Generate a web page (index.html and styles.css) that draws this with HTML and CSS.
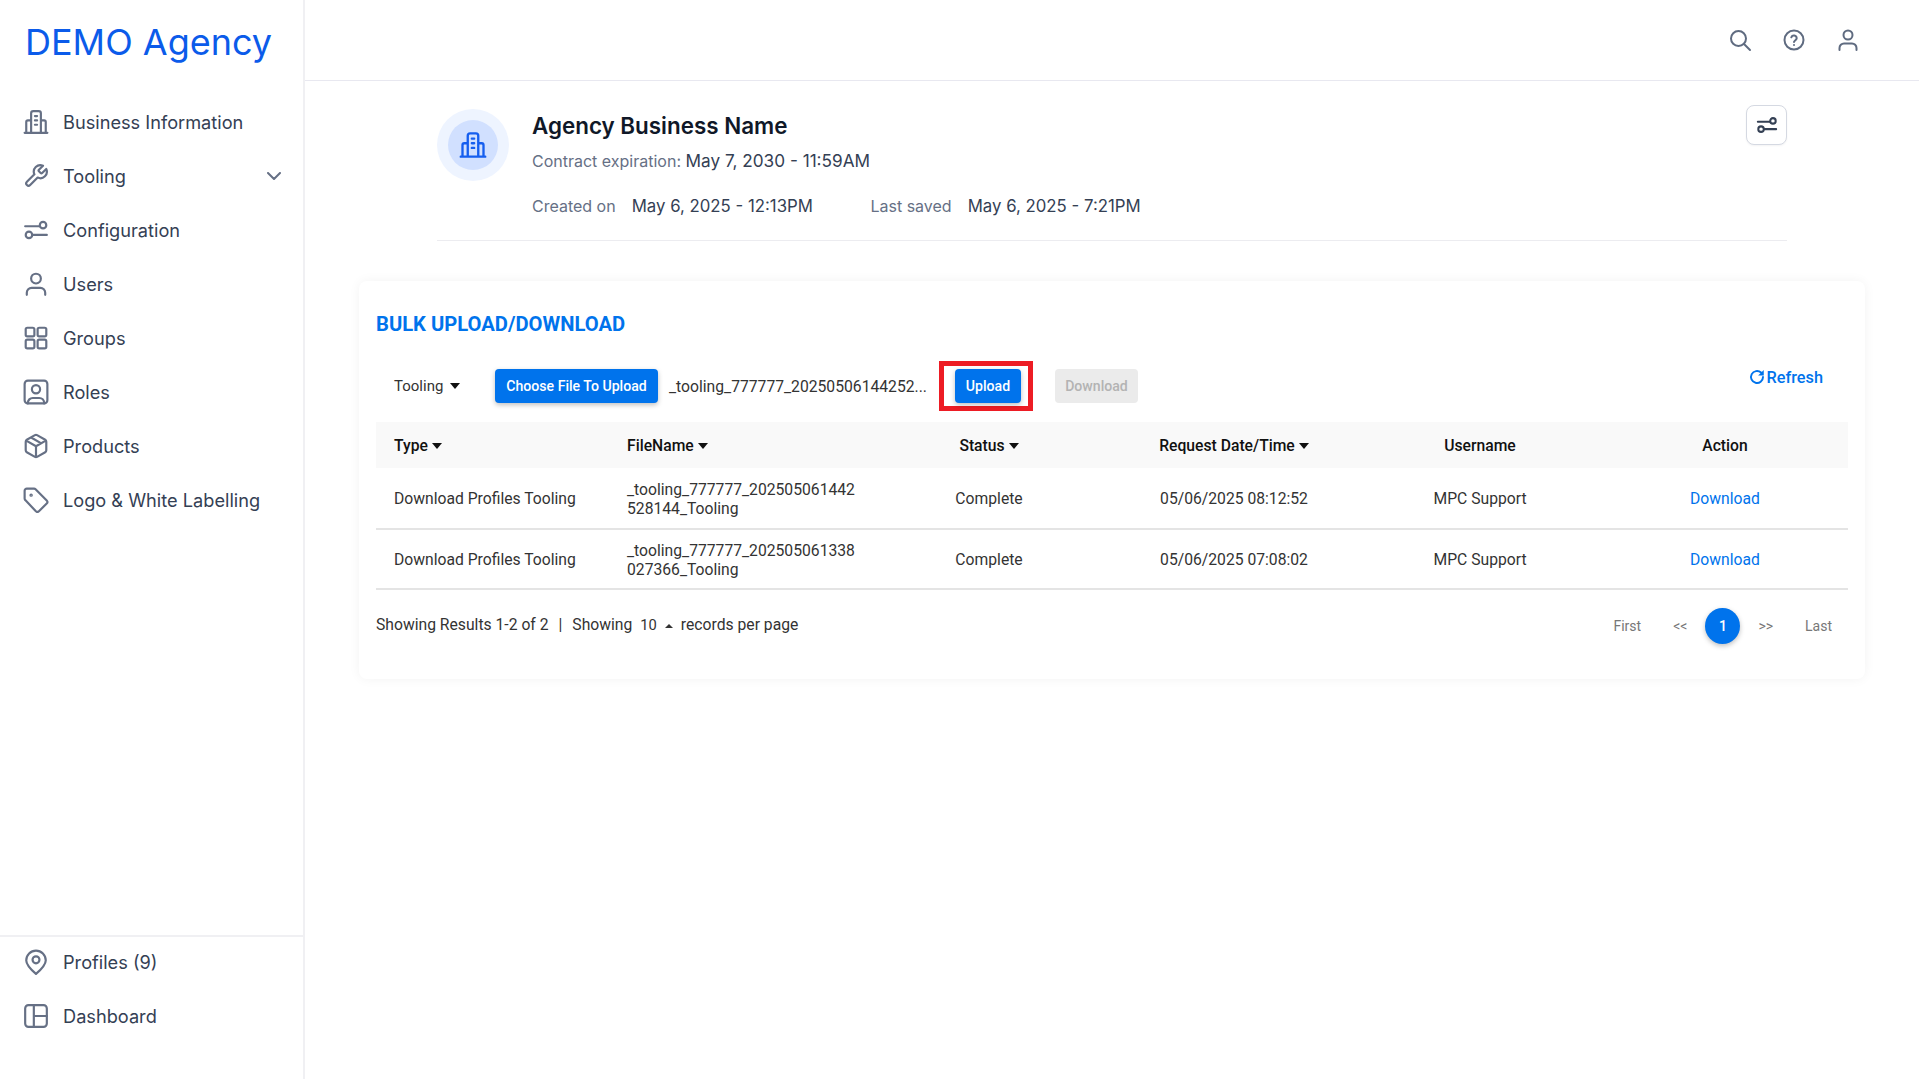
FILE: index.html
```html
<!DOCTYPE html>
<html lang="en">
<head>
    <meta charset="UTF-8">
    <title>Bulk Upload/Download</title>
    <link rel="stylesheet" href="styles.css">
</head>
<body>
    <svg class="sprite" xmlns="http://www.w3.org/2000/svg">
        <symbol id="i-building" viewBox="0 0 24 24"><path d="M1.500 22h21M7.500 22V4a2 2 0 0 1 2-2h5a2 2 0 0 1 2 2v18M7.500 10.500H4.500a1.500 1.500 0 0 0-1.500 1.500v10M16.500 10.500h3a1.500 1.500 0 0 1 1.500 1.500v10M11 6.500h2M11 10.500h2M11 14.500h2"/></symbol>
        <symbol id="i-wrench" viewBox="0 0 24 24"><path d="M14.700 6.300a1 1 0 0 0 0 1.400l1.600 1.600a1 1 0 0 0 1.400 0l3.770-3.770a6 6 0 0 1-7.940 7.940l-6.910 6.910a2.120 2.120 0 0 1-3-3l6.910-6.910a6 6 0 0 1 7.940-7.940l-3.760 3.760z"/></symbol>
        <symbol id="i-sliders" viewBox="0 0 24 24"><path d="M2 8.500h13M9.500 16.500H22"/><circle cx="18.500" cy="7.500" r="3"/><circle cx="5.500" cy="16.500" r="3"/></symbol>
        <symbol id="i-user" viewBox="0 0 24 24"><circle cx="12" cy="7" r="4.500"/><path d="M3.500 22v-2a4.500 4.500 0 0 1 4.500-4.500h8a4.500 4.500 0 0 1 4.500 4.500v2"/></symbol>
        <symbol id="i-grid" viewBox="0 0 24 24"><rect x="2.500" y="2.500" width="8" height="8" rx="1.500"/><rect x="13.500" y="2.500" width="8" height="8" rx="1.500"/><rect x="2.500" y="13.500" width="8" height="8" rx="1.500"/><rect x="13.500" y="13.500" width="8" height="8" rx="1.500"/></symbol>
        <symbol id="i-role" viewBox="0 0 24 24"><rect x="1.500" y="1.500" width="21" height="21" rx="3"/><circle cx="12" cy="9.500" r="3.800"/><path d="M4.500 22.500v-.5a4.500 4.500 0 0 1 4.500-4.500h6a4.500 4.500 0 0 1 4.500 4.500v.5"/></symbol>
        <symbol id="i-box" viewBox="0 0 24 24"><path d="M21.500 8v8a2 2 0 0 1-1 1.730l-7.500 4.300a2 2 0 0 1-2 0l-7.500-4.300a2 2 0 0 1-1-1.730V8a2 2 0 0 1 1-1.730l7.500-4.300a2 2 0 0 1 2 0l7.500 4.300a2 2 0 0 1 1 1.730zM3 7l9 5.200L21 7M12 22.200V12.200M7.500 4.200l9 5.200"/></symbol>
        <symbol id="i-tag" viewBox="0 0 24 24"><path d="M1.500 3.500a2 2 0 0 1 2-2h6.700a2 2 0 0 1 1.400.6l10.300 10.300a2 2 0 0 1 0 2.800l-7.200 7.200a2 2 0 0 1-2.800 0L2.100 12.100a2 2 0 0 1-.6-1.400z"/><circle cx="7.500" cy="7.500" r=".6"/></symbol>
        <symbol id="i-pin" viewBox="0 0 24 24"><path d="M21 10.500c0 3.200-3 7.200-9 12.500-6-5.300-9-9.300-9-12.500a9 9 0 0 1 18 0z"/><circle cx="12" cy="10" r="3.200"/></symbol>
        <symbol id="i-layout" viewBox="0 0 24 24"><rect x="2" y="2" width="20" height="20" rx="3"/><path d="M10 2v20M10 12h12"/></symbol>
        <symbol id="i-search" viewBox="0 0 24 24"><circle cx="10.500" cy="10.500" r="7.500"/><path d="M16 16l6 6"/></symbol>
        <symbol id="i-help" viewBox="0 0 24 24"><circle cx="12" cy="12" r="9.500"/><path d="M9.300 9.300a2.800 2.800 0 0 1 5.400.9c0 1.800-2.700 2.500-2.700 3.700M12 17h.01"/></symbol>
    </svg>

    <div class="app">
        <aside class="sidebar">
            <div class="logo">DEMO Agency</div>
            <nav class="nav">
                <a class="nav-item"><svg class="icon"><use href="#i-building"/></svg>Business Information</a>
                <a class="nav-item"><svg class="icon"><use href="#i-wrench"/></svg>Tooling<svg class="chevron" viewBox="0 0 14 8"><path d="M1 1l6 6 6-6"/></svg></a>
                <a class="nav-item"><svg class="icon"><use href="#i-sliders"/></svg>Configuration</a>
                <a class="nav-item"><svg class="icon"><use href="#i-user"/></svg>Users</a>
                <a class="nav-item"><svg class="icon"><use href="#i-grid"/></svg>Groups</a>
                <a class="nav-item"><svg class="icon"><use href="#i-role"/></svg>Roles</a>
                <a class="nav-item"><svg class="icon"><use href="#i-box"/></svg>Products</a>
                <a class="nav-item"><svg class="icon"><use href="#i-tag"/></svg>Logo &amp; White Labelling</a>
            </nav>
            <nav class="nav-bottom">
                <a class="nav-item"><svg class="icon"><use href="#i-pin"/></svg>Profiles (9)</a>
                <a class="nav-item"><svg class="icon"><use href="#i-layout"/></svg>Dashboard</a>
            </nav>
        </aside>

        <div class="main">
            <header class="topbar">
                <svg class="top-icon"><use href="#i-search"/></svg>
                <svg class="top-icon"><use href="#i-help"/></svg>
                <svg class="top-icon"><use href="#i-user"/></svg>
            </header>

            <section class="profile">
                <div class="avatar">
                    <div class="avatar-inner"><svg class="avatar-icon"><use href="#i-building"/></svg></div>
                </div>
                <div class="profile-info">
                    <h1>Agency Business Name</h1>
                    <p class="contract"><span class="muted">Contract expiration:</span> <span class="value">May 7, 2030 - 11:59AM</span></p>
                    <p class="dates">
                        <span class="muted">Created on</span><span class="value date-value">May 6, 2025 - 12:13PM</span>
                        <span class="muted">Last saved</span><span class="value date-value">May 6, 2025 - 7:21PM</span>
                    </p>
                </div>
                <button class="settings-btn"><svg class="settings-icon"><use href="#i-sliders"/></svg></button>
            </section>

            <section class="card">
                <h2>BULK UPLOAD/DOWNLOAD</h2>

                <div class="toolbar">
                    <span class="select">Tooling<i class="caret"></i></span>
                    <button class="btn btn-primary choose-btn">Choose File To Upload</button>
                    <span class="file-name">_tooling_777777_20250506144252...</span>
                    <span class="highlight"><button class="btn btn-primary upload-btn">Upload</button></span>
                    <button class="btn btn-disabled">Download</button>
                    <a class="refresh">
                        <svg class="refresh-icon" viewBox="0 0 24 24"><path d="M20 12a8 8 0 1 1-2.600-5.900"/><path class="fill" d="M21 2.500v7.500h-7.500z"/></svg>Refresh
                    </a>
                </div>

                <table class="data-table">
                    <thead>
                        <tr>
                            <th class="col-type">Type<i class="caret"></i></th>
                            <th class="col-file">FileName<i class="caret"></i></th>
                            <th class="col-status">Status<i class="caret"></i></th>
                            <th class="col-date">Request Date/Time<i class="caret"></i></th>
                            <th class="col-user">Username</th>
                            <th class="col-action">Action</th>
                        </tr>
                    </thead>
                    <tbody>
                        <tr>
                            <td class="col-type">Download Profiles Tooling</td>
                            <td class="col-file">_tooling_777777_202505061442<br>528144_Tooling</td>
                            <td class="col-status">Complete</td>
                            <td class="col-date">05/06/2025 08:12:52</td>
                            <td class="col-user">MPC Support</td>
                            <td class="col-action"><a class="link">Download</a></td>
                        </tr>
                        <tr>
                            <td class="col-type">Download Profiles Tooling</td>
                            <td class="col-file">_tooling_777777_202505061338<br>027366_Tooling</td>
                            <td class="col-status">Complete</td>
                            <td class="col-date">05/06/2025 07:08:02</td>
                            <td class="col-user">MPC Support</td>
                            <td class="col-action"><a class="link">Download</a></td>
                        </tr>
                    </tbody>
                </table>

                <div class="table-footer">
                    <div class="results">
                        Showing Results 1-2 of 2<span class="sep">|</span>Showing<span class="per-page">10<i class="caret-up"></i></span>records per page
                    </div>
                    <div class="pagination">
                        <a>First</a>
                        <a>&lt;&lt;</a>
                        <a class="current">1</a>
                        <a>&gt;&gt;</a>
                        <a>Last</a>
                    </div>
                </div>
            </section>
        </div>
    </div>
</body>
</html>
```

FILE: styles.css
```css
* {
    box-sizing: border-box;
}

html, body {
    margin: 0;
    height: 100%;
    overflow: hidden;
    background-color: #fff;
}

body {
    font-family: Roboto, sans-serif;
    color: #333;
}

.sprite {
    display: none;
}

svg {
    fill: none;
    stroke: currentColor;
    stroke-width: 2;
    stroke-linecap: round;
    stroke-linejoin: round;
}

.app {
    display: flex;
    height: 100vh;
}

/* sidebar */
.sidebar {
    width: 305px;
    flex-shrink: 0;
    display: flex;
    flex-direction: column;
    border-right: 2px solid #f0f0f3;
    font-family: Inter, sans-serif;
}

.logo {
    height: 84px;
    padding-left: 25px;
    font-size: 36px;
    line-height: 84px;
    color: #0b5bea;
}

.nav {
    flex: 1;
    padding-top: 11px;
}

.nav-item {
    display: flex;
    align-items: center;
    height: 54px;
    padding-left: 23px;
    font-size: 18.200px;
    color: #344054;
}

.icon {
    width: 26px;
    height: 26px;
    margin-right: 14px;
    color: #667085;
}

.chevron {
    width: 14px;
    height: 8px;
    margin-left: auto;
    margin-right: 22px;
    color: #667085;
}

.nav-bottom {
    border-top: 2px solid #f0f0f3;
    height: 144px;
}

.nav-bottom .nav-item:first-child {
    margin-top: -2px;
}

/* main */
.main {
    flex: 1;
    min-width: 0;
}

.topbar {
    height: 81px;
    display: flex;
    align-items: center;
    justify-content: flex-end;
    gap: 30px;
    padding-right: 59px;
    border-bottom: 1px solid #e8e8f0;
}

.top-icon {
    width: 24px;
    height: 24px;
    color: #5f6b80;
}

.profile {
    display: flex;
    margin: 27px 132px 0;
    height: 133px;
    border-bottom: 1px solid #ececf0;
    font-family: Inter, sans-serif;
}

.avatar {
    width: 72px;
    height: 72px;
    margin: 1px 23px 0 0;
    display: flex;
    align-items: center;
    justify-content: center;
    border-radius: 50%;
    background-color: #eef4ff;
}

.avatar-inner {
    width: 50px;
    height: 50px;
    display: flex;
    align-items: center;
    justify-content: center;
    border-radius: 50%;
    background-color: #d1e0ff;
}

.avatar-icon {
    width: 28px;
    height: 28px;
    color: #155eef;
}

.profile-info {
    flex: 1;
}

h1 {
    margin: 2px 0 0;
    font-size: 22.400px;
    line-height: 32px;
    font-weight: 600;
    color: #101828;
}

.contract {
    margin: 7px 0 0;
    font-size: 16px;
    line-height: 24px;
}

.muted {
    color: #667085;
}

.value {
    font-size: 17.200px;
    color: #344054;
}

.dates {
    margin: 21px 0 0;
    font-size: 16px;
    line-height: 24px;
}

.date-value {
    margin: 0 53px 0 16px;
    font-size: 16.800px;
}

.settings-btn {
    width: 41px;
    height: 40px;
    margin-top: -3px;
    padding: 0;
    display: flex;
    align-items: center;
    justify-content: center;
    background-color: #fff;
    border: 1px solid #d5d9e2;
    border-radius: 8px;
    box-shadow: 0 1px 2px rgba(16, 24, 40, 0.05);
}

.settings-icon {
    width: 22px;
    height: 22px;
    color: #344054;
    stroke-width: 2.200;
}

/* card */
.card {
    margin: 40px 54px 0;
    height: 398px;
    padding: 31px 17px 0;
    border-radius: 8px;
    box-shadow: 0 0 12px rgba(0, 0, 0, 0.05);
}

h2 {
    margin: 0;
    font-size: 20.200px;
    line-height: 24px;
    font-weight: 700;
    color: #0073ec;
}

.toolbar {
    display: flex;
    align-items: center;
    margin-top: 25px;
    height: 50px;
    padding-left: 18px;
    font-size: 15.700px;
}

.select {
    width: 101px;
    font-size: 15px;
}

.caret {
    display: inline-block;
    margin-left: 4px;
    vertical-align: 2px;
    border-top: 6px solid #111;
    border-left: 5px solid transparent;
    border-right: 5px solid transparent;
}

.select .caret {
    margin-left: 7px;
}

.btn {
    height: 34px;
    border: none;
    border-radius: 4px;
    font-family: Roboto, sans-serif;
    font-size: 14.100px;
    font-weight: 500;
}

.btn-primary {
    background-color: #0073ec;
    color: #fff;
    box-shadow: 0 2px 5px rgba(0, 0, 0, 0.25);
}

.btn-disabled {
    width: 83px;
    margin-left: 22px;
    background-color: #ebebeb;
    color: #b3b3b3;
}

.choose-btn {
    width: 163px;
}

.file-name {
    width: 281px;
    padding-left: 11px;
    white-space: nowrap;
}

.highlight {
    display: block;
    padding: 3px 7px 3px 11px;
    border: 5px solid #ed1c24;
}

.upload-btn {
    display: block;
    width: 66px;
}

.refresh {
    display: flex;
    align-items: center;
    margin: -18px 25px 0 auto;
    font-size: 16.300px;
    font-weight: 500;
    color: #0073ec;
}

.refresh-icon {
    width: 18px;
    height: 18px;
    margin-right: 1px;
    stroke-width: 2.600;
}

.refresh-icon .fill {
    fill: currentColor;
    stroke: none;
}

/* table */
.data-table {
    width: 100%;
    margin-top: 11px;
    table-layout: fixed;
    border-collapse: collapse;
    font-size: 15.700px;
}

.data-table th {
    height: 46px;
    font-weight: 500;
    color: #111;
    background-color: #f9f9f9;
}

.data-table td {
    height: 60.500px;
    line-height: 19px;
    border-bottom: 2px solid #e4e4e4;
}

.data-table th, .data-table td {
    padding: 0;
    text-align: center;
}

.data-table td {
    padding-top: 2px;
}

.data-table .col-type {
    width: 233px;
    padding-left: 18px;
    text-align: left;
}

.data-table .col-file {
    width: 259px;
    padding-left: 18px;
    text-align: left;
    white-space: nowrap;
}

.col-status {
    width: 242px;
}

.col-date {
    width: 248px;
}

.col-user {
    width: 244px;
}

.link {
    color: #0073ec;
}

/* footer */
.table-footer {
    display: flex;
    justify-content: space-between;
    font-size: 15.700px;
}

.results {
    padding-top: 26px;
    line-height: 18px;
}

.sep {
    margin: 0 10px;
}

.per-page {
    margin: 0 8px;
    font-size: 14.700px;
}

.caret-up {
    display: inline-block;
    margin-left: 8px;
    vertical-align: 2px;
    border-bottom: 4px solid #333;
    border-left: 4px solid transparent;
    border-right: 4px solid transparent;
}

.pagination {
    display: flex;
    align-items: center;
    margin: 18px 16px 0 0;
    gap: 32px;
    font-size: 14px;
    color: #777;
}

.pagination .current {
    width: 35px;
    height: 36px;
    margin: 0 -14px;
    display: flex;
    align-items: center;
    justify-content: center;
    border-radius: 50%;
    background-color: #0073ec;
    color: #fff;
    font-weight: 500;
    box-shadow: 0 2px 5px rgba(0, 0, 0, 0.25);
}
```
